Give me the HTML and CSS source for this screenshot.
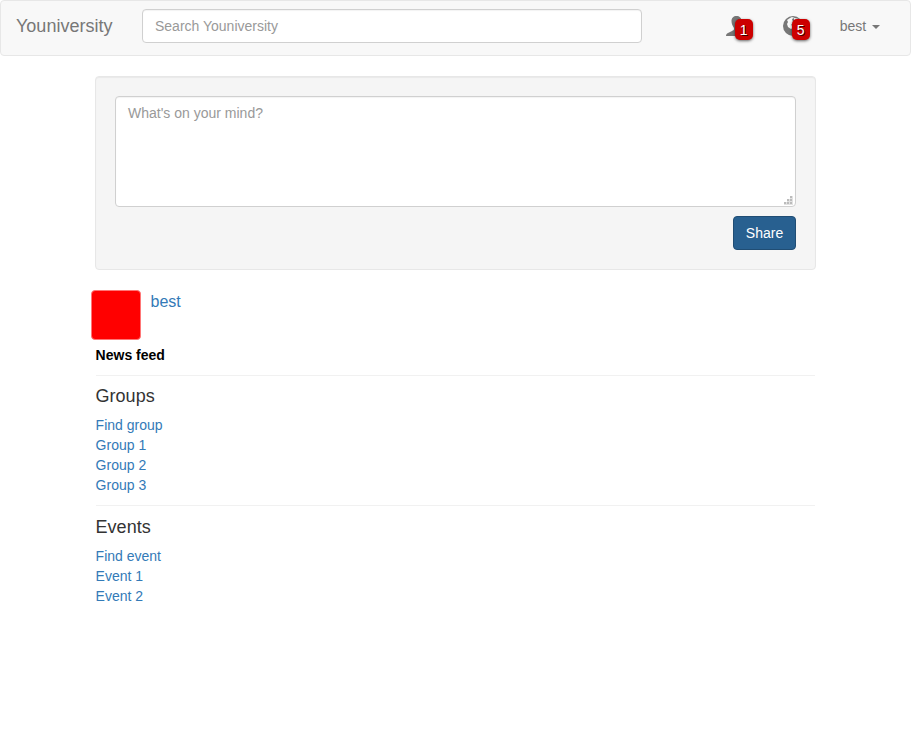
FILE: index.html
```html
<!DOCTYPE html>
<html lang="en">
<head>
<meta charset="utf-8">
<title>Youniversity</title>
<link rel="stylesheet" href="styles.css">
</head>
<body>
<nav class="navbar">
  <a class="brand" href="#">Youniversity</a>
  <input class="control search" type="text" placeholder="Search Youniversity">
  <div class="nav-right">
    <a class="nav-icon" href="#">
      <svg width="20" height="20" viewBox="0 0 20 20"><path d="M10.500 0C7.500 0 5.500 2 5.500 5c0 3 1 4.500 2.500 7v1c0 1-1 1.500-2 2l-4 2C.6 17.700 0 18.500 0 20h20c0-1.500-.6-2.300-2-3l-4-2c-1-.5-2-1-2-2v-1c2-2 3.500-4 3.500-7 0-3-2-5-5-5z"/></svg>
      <span class="badge">1</span>
    </a>
    <a class="nav-icon" href="#">
      <svg width="20" height="20" viewBox="0 0 20 20"><circle cx="10" cy="10" r="10"/><path class="land" d="M7 2l2-1 3 1 4 1 2 4-1 4-3 1-3-1-3 2-3-2-1-3 1-2-1-2z"/><path d="M9 3l2-1v2l2 1-1 2-2-1zM8 8l2 1-1 1z"/></svg>
      <span class="badge">5</span>
    </a>
    <a class="user" href="#">best <span class="caret"></span></a>
  </div>
</nav>
<main class="container">
  <form class="well">
    <div class="composer">
      <textarea class="control" placeholder="What's on your mind?"></textarea>
      <svg class="grip" width="9" height="9" viewBox="0 0 9 9"><path class="fill" d="M6 0h3v9H0V6h3V3h3z"/><path d="M6 0h2v2h-2zM3 3h2v2h-2zM6 3h2v2h-2zM0 6h2v2h-2zM3 6h2v2h-2zM6 6h2v2h-2z"/></svg>
    </div>
    <button class="share" type="button">Share</button>
  </form>
  <div class="profile"><span class="avatar"></span><a href="#">best</a></div>
  <strong class="feed">News feed</strong>
  <hr>
  <section>
    <h4>Groups</h4>
    <a href="#">Find group</a><a href="#">Group 1</a><a href="#">Group 2</a><a href="#">Group 3</a>
  </section>
  <hr>
  <section class="events">
    <h4>Events</h4>
    <a href="#">Find event</a><a href="#">Event 1</a><a href="#">Event 2</a>
  </section>
</main>
</body>
</html>
```
FILE: styles.css
```css
* { box-sizing: border-box; }
body { margin: 0; font: 14px/20px "Liberation Sans", Arial, sans-serif; color: #333; background: #fff; }
a { color: #337ab7; text-decoration: none; }
.navbar { display: flex; height: 56px; margin-bottom: 20px; padding: 8px 15px; background: #f8f8f8; border: 1px solid #e7e7e7; border-radius: 4px; }
.brand { width: 126px; padding-top: 7px; font-size: 18px; color: #777; }
.control { display: block; padding: 6px 12px; font: inherit; color: #555; background: #fff; border: 1px solid #d0d0d0; border-radius: 4px; box-shadow: inset 0 1px 1px rgba(0,0,0,.05); }
.control::placeholder { color: #999; opacity: 1; }
.search { width: 500px; height: 34px; }
.nav-right { display: flex; margin-left: auto; padding-right: 15px; }
.nav-icon { position: relative; width: 57px; padding-top: 7px; }
.nav-icon svg { display: block; fill: #777; }
.nav-icon svg .land { fill: #f8f8f8; }
.badge { position: absolute; left: 9px; top: 10px; width: 18px; height: 21px; border-radius: 5px; background: #c00; color: #fff; line-height: 22px; text-align: center; text-shadow: 1px 1px 0 rgba(0,0,0,.7); box-shadow: 0 1px 3px rgba(0,0,0,.6); }
.user { padding-top: 7px; color: #777; }
.caret { display: inline-block; margin-left: 2px; vertical-align: middle; border-top: 4px solid; border-right: 4px solid transparent; border-left: 4px solid transparent; }
.container { width: 719px; margin: 0 auto; }
.well { width: 721px; height: 194px; margin: 0 0 20px -1px; padding: 19px; background: #f5f5f5; border: 1px solid #e7e7e7; border-radius: 4px; box-shadow: inset 0 1px 1px rgba(0,0,0,.05); }
.composer { position: relative; }
textarea.control { width: 100%; height: 111px; resize: none; }
.grip { position: absolute; right: 3px; bottom: 2px; fill: #bbb; }
.grip .fill { fill: #e2e2e2; }
.share { display: block; width: 63px; height: 34px; margin: 9px 0 0 auto; padding: 0; font: inherit; color: #fff; background: #286090; border: 1px solid #204d74; border-radius: 4px; }
.profile { display: flex; gap: 9.5px; height: 55px; margin-left: -5px; font-size: 16px; line-height: 23px; }
.avatar { width: 50px; height: 50px; background: red; border: 1px solid #f77; border-radius: 4px; }
.feed { display: block; color: #000; }
.feed, section { margin-left: -.4px; }
hr { height: 1px; margin: 10px 0; border: 0; background: #f1f1f1; }
h4 { margin: 0 0 9px; font-size: 18px; line-height: 20px; font-weight: 500; }
section a { display: block; }
.events { padding-top: 1px; }
```
